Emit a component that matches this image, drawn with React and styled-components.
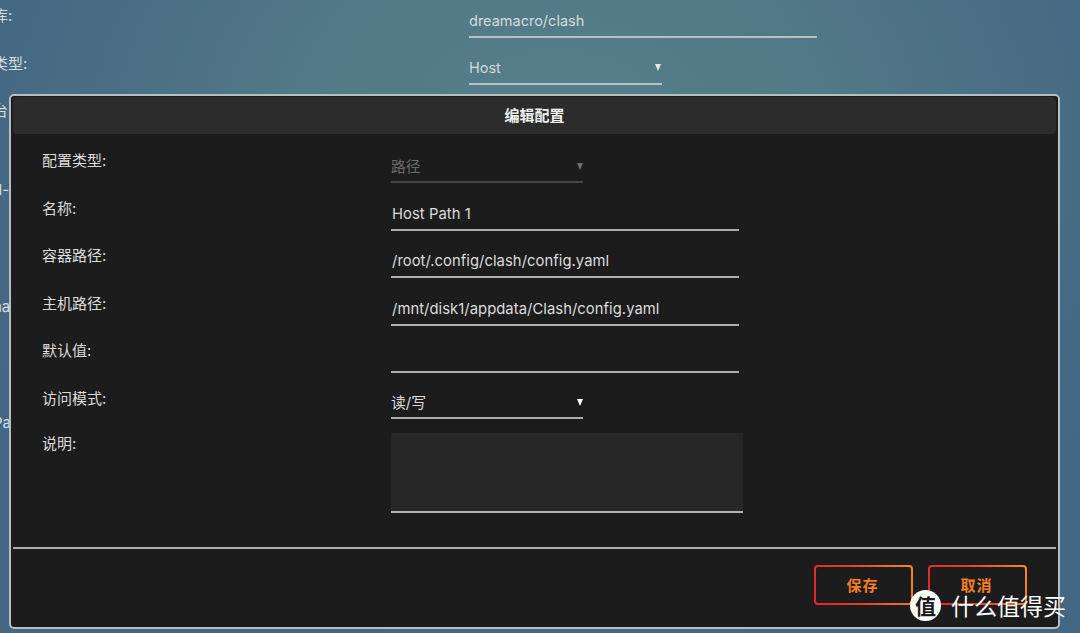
import React from "react";
import styled, { createGlobalStyle } from "styled-components";

const Global = createGlobalStyle`
  html, body { margin: 0; padding: 0; height: 100%; overflow: hidden; }
  #root { height: 633px; }
`;

const FONT = `Inter, "Noto Sans CJK SC", sans-serif`;

const Page = styled.div`
  position: relative;
  width: 1080px;
  height: 633px;
  overflow: hidden;
  font-family: ${FONT};
  background:
    radial-gradient(ellipse 620px 520px at 560px 150px, #56808a 0%, #517886 45%, rgba(74,110,134,0) 100%),
    #436683;
`;

const BackForm = styled.div`
  display: flex;
  flex-direction: column;
  padding-top: 2px;
  margin-left: -37px;
`;

const BackRow = styled.div`
  display: flex;
  height: 47.3px;
`;

const BackLabel = styled.div`
  width: 506px;
  color: #d6dde0;
  font-size: 15px;
  line-height: 20px;
  white-space: nowrap;
  padding-top: ${(p) => p.$top || 0}px;
`;

const BackField = styled.div`
  width: ${(p) => p.$w}px;
  height: 36px;
  box-sizing: border-box;
  border-bottom: 2px solid #b4c2c6;
  color: #d2dadc;
  font-size: 14.5px;
  line-height: 38px;
  position: relative;
`;

const Arrow = styled.span`
  position: absolute;
  right: ${(p) => p.$right}px;
  top: ${(p) => p.$top}px;
  width: 0;
  height: 0;
  border-left: 3.5px solid transparent;
  border-right: 3.5px solid transparent;
  border-top: 7px solid ${(p) => p.$color};
`;

const Dialog = styled.div`
  position: absolute;
  left: 9px;
  top: 94px;
  width: 1051px;
  height: 535px;
  box-sizing: border-box;
  border: 2px solid #b6bec2;
  border-radius: 5px;
  background: #1c1c1c;
  padding: 1px 2px 0;
  display: flex;
  flex-direction: column;
`;

const Header = styled.div`
  height: 37px;
  flex: none;
  background: #2c2c2c;
  border-radius: 4px;
  color: #f0f0f0;
  font-size: 15px;
  font-weight: 700;
  text-align: center;
  line-height: 38px;
`;

const Form = styled.div`
  flex: none;
  height: 415px;
  box-sizing: border-box;
  padding: 10px 0 0 29px;
  display: flex;
  flex-direction: column;
  border-bottom: 2px solid #adadad;
`;

const Row = styled.div`
  display: flex;
  height: ${(p) => p.$h || 47.5}px;
  flex: none;
`;

const Label = styled.div`
  width: 349px;
  flex: none;
  color: #dcdcdc;
  font-size: 15px;
  line-height: 20px;
  padding-top: ${(p) => p.$top ?? 7}px;
`;

const Field = styled.div`
  position: relative;
  width: ${(p) => p.$w}px;
  height: ${(p) => p.$h || 37}px;
  margin-top: 2px;
  box-sizing: border-box;
  border-bottom: 2px solid ${(p) => (p.$dim ? "#444444" : "#adadad")};
  color: ${(p) => (p.$dim ? "#6a6a6a" : "#dcdcdc")};
  font-size: 14.8px;
  letter-spacing: 0.05px;
  line-height: ${(p) => p.$lh || 40}px;
  padding-left: ${(p) => p.$pad ?? 1}px;
  white-space: nowrap;
`;

const TextArea = styled.div`
  width: 352px;
  height: 80px;
  margin-top: 4px;
  box-sizing: border-box;
  background: #272727;
  border-bottom: 2px solid #b4b4b4;
`;

const Footer = styled.div`
  flex: 1;
  display: flex;
  justify-content: flex-end;
  align-items: flex-start;
  gap: 15px;
  padding: 16px 29px 0 0;
`;

const Btn = styled.button`
  width: 99px;
  height: 40px;
  box-sizing: border-box;
  border: 2px solid transparent;
  border-radius: 4px;
  background:
    linear-gradient(#1c1c1c, #1c1c1c) padding-box,
    linear-gradient(70deg, #e4232a 0%, #e8412a 45%, #f78a1f 100%) border-box;
  color: #f57f20;
  font-family: ${FONT};
  font-size: 15px;
  font-weight: 700;
  letter-spacing: 1px;
  padding: 0 2px 2px 0;
`;

const Watermark = styled.div`
  position: absolute;
  left: 910px;
  top: 589px;
  display: flex;
  align-items: center;
  gap: 10px;
  color: #fff;
  font-family: "Noto Sans CJK SC", sans-serif;
  font-size: 23px;
  line-height: 32px;
  white-space: nowrap;
`;

const Badge = styled.div`
  width: 31px;
  height: 31px;
  margin-top: 1px;
  border-radius: 50%;
  background: #fff;
  color: #1a1a1a;
  font-size: 21px;
  font-weight: 700;
  line-height: 30px;
  text-align: center;
`;

const backRows = [
  { label: "镜像库:", top: 4, field: "dreamacro/clash", w: 348 },
  { label: "网络类型:", top: 5, field: "Host", w: 193, arrow: true },
  { label: "控制台:", top: 4 },
  { label: "特权d-", top: 36 },
  { label: "" },
  { label: "名称na", top: 59 },
  { label: "" },
  { label: "路径Pa", top: 80 },
];

const rows = [
  { label: "配置类型:", value: "路径", w: 192, dim: true, arrow: "#6f6f6f", lh: 43, at: 17, pad: 0 },
  { label: "名称:", value: "Host Path 1", w: 348 },
  { label: "容器路径:", value: "/root/.config/clash/config.yaml", w: 348 },
  { label: "主机路径:", value: "/mnt/disk1/appdata/Clash/config.yaml", w: 348 },
  { label: "默认值:", value: "", w: 348 },
  { label: "访问模式:", value: "读/写", w: 192, arrow: "#ffffff", h: 35, lh: 38, at: 15, pad: 0 },
];

export default function App() {
  return (
    <Page>
      <Global />
      <BackForm>
        {backRows.map((r, i) => (
          <BackRow key={i}>
            <BackLabel $top={r.top}>{r.label}</BackLabel>
            {r.w && (
              <BackField $w={r.w}>
                {r.field}
                {r.arrow && <Arrow $right={1} $top={15} $color="#e4e8ea" />}
              </BackField>
            )}
          </BackRow>
        ))}
      </BackForm>
      <Dialog>
        <Header>编辑配置</Header>
        <Form>
          {rows.map((r) => (
            <Row key={r.label}>
              <Label>{r.label}</Label>
              <Field $w={r.w} $dim={r.dim} $h={r.h} $lh={r.lh} $pad={r.pad}>
                {r.value}
                {r.arrow && <Arrow $right={0} $top={r.at} $color={r.arrow} />}
              </Field>
            </Row>
          ))}
          <Row $h={90}>
            <Label $top={5}>说明:</Label>
            <TextArea />
          </Row>
        </Form>
        <Footer>
          <Btn>保存</Btn>
          <Btn>取消</Btn>
        </Footer>
      </Dialog>
      <Watermark>
        <Badge>值</Badge>
        什么值得买
      </Watermark>
    </Page>
  );
}
